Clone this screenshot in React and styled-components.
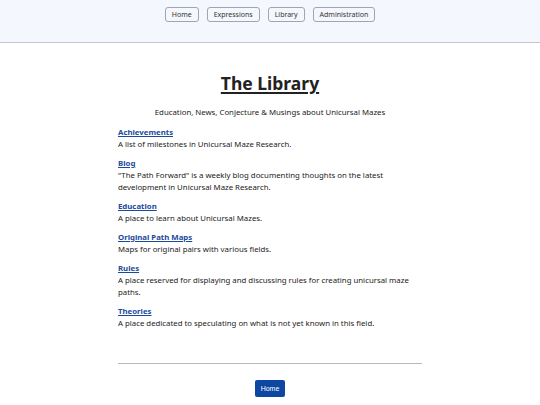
import React from 'react';
import styled, { createGlobalStyle } from 'styled-components';

const GlobalStyle = createGlobalStyle`
    body {
        margin: 0;
        background: #ffffff;
        font-family: "Noto Sans", "Open Sans", sans-serif;
        color: #222222;
    }
`;

const Header = styled.header`
    display: flex;
    justify-content: center;
    align-items: flex-start;
    gap: 8px;
    height: 43px;
    padding-top: 7px;
    box-sizing: border-box;
    background: #f4f7fd;
    border-bottom: 1px solid #c4c6d0;
`;

const NavButton = styled.button`
    height: 15px;
    padding: 0 6px;
    font-family: "Noto Sans", sans-serif;
    font-size: 7px;
    color: #333333;
    background: #f4f7fd;
    border: 1px solid #a2a5ad;
    border-radius: 3px;
    cursor: pointer;
`;

const Main = styled.main`
    width: 304px;
    margin: 0 auto;
    display: flex;
    flex-direction: column;
`;

const Title = styled.h1`
    margin: 27px 0 0;
    text-align: center;
    font-size: 17.5px;
    line-height: 26px;
    font-weight: 700;
    text-decoration: underline;
    text-decoration-thickness: 2px;
    text-underline-offset: 2px;
    color: #222222;
`;

const Subtitle = styled.p`
    margin: 10px 0 0;
    text-align: center;
    font-size: 7.8px;
    line-height: 12px;
`;

const Entries = styled.div`
    display: flex;
    flex-direction: column;
    gap: 7px;
    margin-top: 8px;
`;

const Entry = styled.div`
    display: flex;
    flex-direction: column;
`;

const EntryLink = styled.a`
    font-size: 7.8px;
    line-height: 12px;
    font-weight: 700;
    color: #1a4a9c;
    text-decoration: underline;
    cursor: pointer;
`;

const EntryText = styled.p`
    margin: 0;
    font-size: 7.8px;
    line-height: 12px;
`;

const Divider = styled.hr`
    margin: 34px 0 0;
    border: none;
    border-top: 1px solid #b8b8b8;
`;

const Footer = styled.div`
    display: flex;
    justify-content: center;
    padding-top: 16px;
`;

const HomeButton = styled.button`
    width: 30px;
    height: 17px;
    padding: 0;
    font-family: "Liberation Sans", Arial, sans-serif;
    font-size: 7px;
    color: #ffffff;
    background: #0d47a1;
    border: none;
    border-radius: 2px;
    cursor: pointer;
`;

const entries = [
    { name: 'Achievements', text: 'A list of milestones in Unicursal Maze Research.' },
    { name: 'Blog', text: '"The Path Forward" is a weekly blog documenting thoughts on the latest development in Unicursal Maze Research.' },
    { name: 'Education', text: 'A place to learn about Unicursal Mazes.' },
    { name: 'Original Path Maps', text: 'Maps for original pairs with various fields.' },
    { name: 'Rules', text: 'A place reserved for displaying and discussing rules for creating unicursal maze paths.' },
    { name: 'Theories', text: 'A place dedicated to speculating on what is not yet known in this field.' },
];

export default function App() {
    return (
        <>
            <GlobalStyle />
            <Header>
                <NavButton>Home</NavButton>
                <NavButton>Expressions</NavButton>
                <NavButton>Library</NavButton>
                <NavButton>Administration</NavButton>
            </Header>
            <Main>
                <Title>The Library</Title>
                <Subtitle>Education, News, Conjecture &amp; Musings about Unicursal Mazes</Subtitle>
                <Entries>
                    {entries.map((e) => (
                        <Entry key={e.name}>
                            <EntryLink>{e.name}</EntryLink>
                            <EntryText>{e.text}</EntryText>
                        </Entry>
                    ))}
                </Entries>
                <Divider />
                <Footer>
                    <HomeButton>Home</HomeButton>
                </Footer>
            </Main>
        </>
    )
}
